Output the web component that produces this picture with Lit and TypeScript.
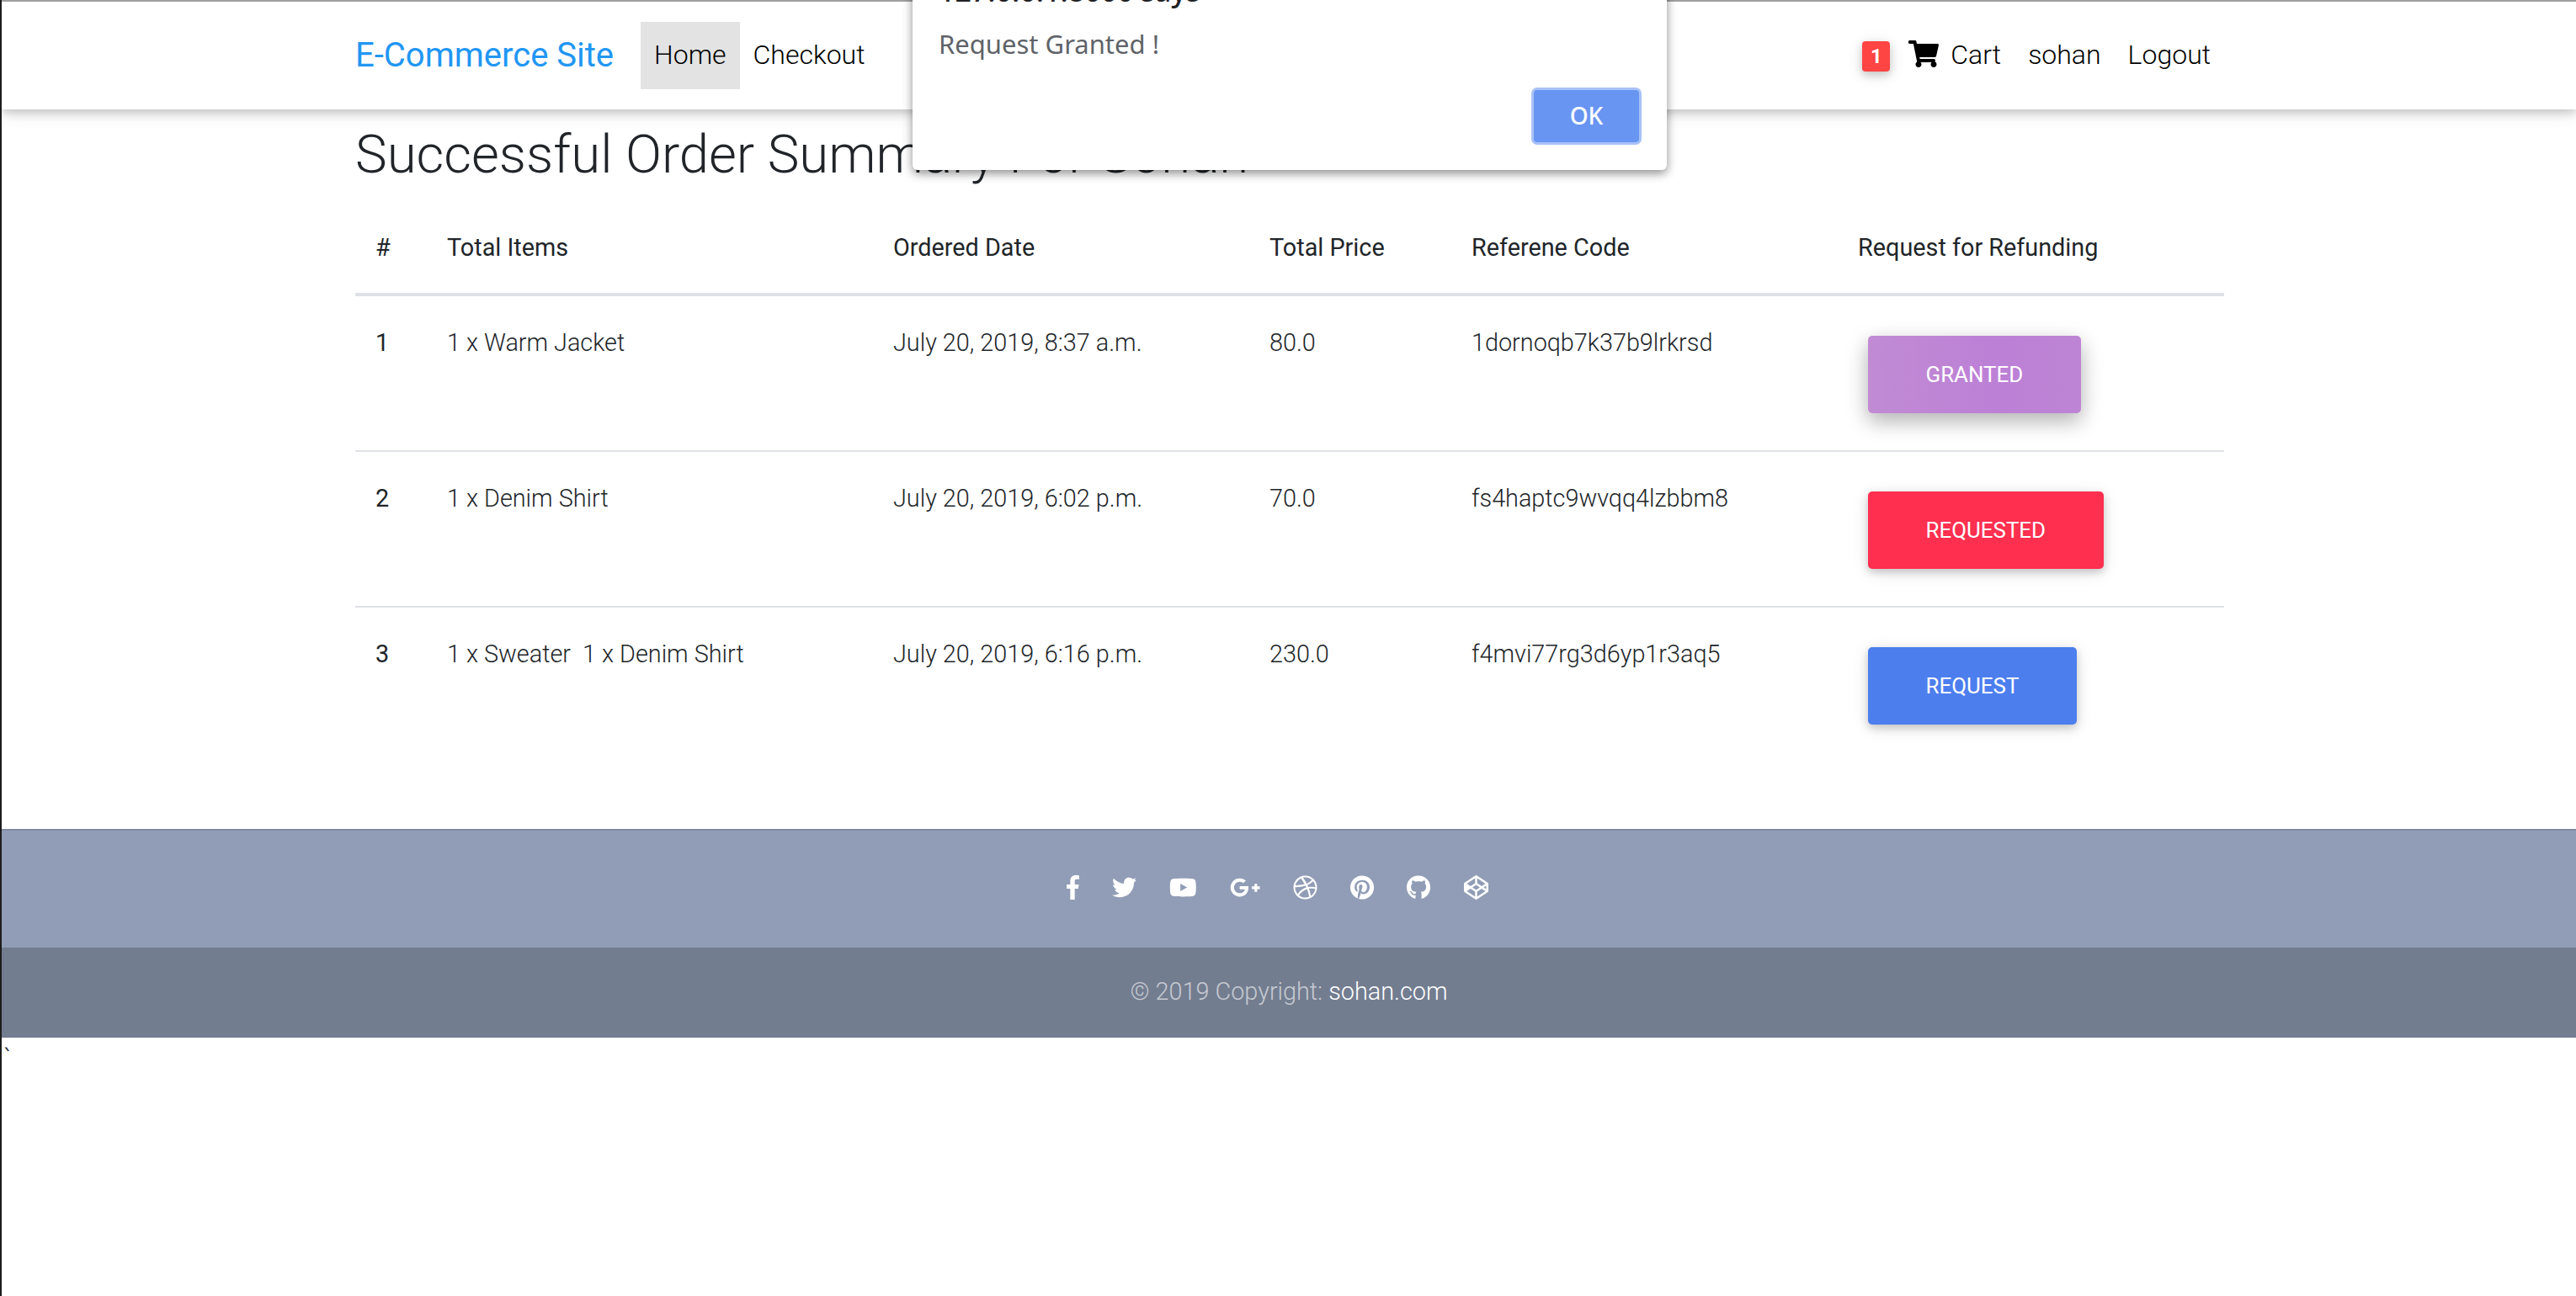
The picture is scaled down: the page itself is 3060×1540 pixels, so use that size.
import { LitElement, html, css, svg } from "lit";
import { customElement } from "lit/decorators.js";
import { classMap } from "lit/directives/class-map.js";

const SOCIAL = [
  { w: 264, d: "M76.7 512V283H0v-91h76.7v-71.7C76.7 42.4 124.3 0 193.8 0c33.3 0 61.9 2.5 70.2 3.6V85h-48.2c-37.8 0-45.1 18-45.1 44.3V192H256l-11.7 91h-73.6v229" },
  { w: 512, d: "M459.37 151.716c.325 4.548.325 9.097.325 13.645 0 138.72-105.583 298.558-298.558 298.558-59.452 0-114.68-17.219-161.137-47.106 8.447.974 16.568 1.299 25.34 1.299 49.055 0 94.213-16.568 130.274-44.832-46.132-.975-84.792-31.188-98.112-72.772 6.498.974 12.995 1.624 19.818 1.624 9.421 0 18.843-1.3 27.614-3.573-48.081-9.747-84.143-51.98-84.143-102.985v-1.299c13.969 7.797 30.214 12.67 47.431 13.319-28.264-18.843-46.781-51.005-46.781-87.391 0-19.492 5.197-37.36 14.294-52.954 51.655 63.675 129.3 105.258 216.365 109.807-1.624-7.797-2.599-15.918-2.599-24.04 0-57.828 46.782-104.934 104.934-104.934 30.213 0 57.502 12.67 76.67 33.137 23.715-4.548 46.456-13.32 66.599-25.34-7.798 24.366-24.366 44.833-46.132 57.827 21.117-2.273 41.584-8.122 60.426-16.243-14.292 20.791-32.161 39.308-52.628 54.253z" },
  { w: 576, d: "M549.655 124.083c-6.281-23.65-24.787-42.276-48.284-48.597C458.781 64 288 64 288 64S117.22 64 74.629 75.486c-23.497 6.322-42.003 24.947-48.284 48.597-11.412 42.867-11.412 132.305-11.412 132.305s0 89.438 11.412 132.305c6.281 23.65 24.787 41.5 48.284 47.821C117.22 448 288 448 288 448s170.78 0 213.371-11.486c23.497-6.321 42.003-24.171 48.284-47.821 11.412-42.867 11.412-132.305 11.412-132.305s0-89.438-11.412-132.305zm-317.51 213.508V175.185l142.739 81.205-142.739 81.201z" },
  { w: 640, d: "M386.061 228.496c1.834 9.692 3.143 19.384 3.143 31.956C389.204 370.205 315.599 448 204.8 448c-106.084 0-192-85.915-192-192s85.916-192 192-192c51.864 0 95.083 18.859 128.611 50.292l-52.126 50.03c-14.145-13.621-39.028-29.599-76.485-29.599-65.484 0-118.92 54.221-118.92 121.277 0 67.056 53.436 121.277 118.92 121.277 75.961 0 104.513-54.745 108.965-82.773H204.8v-66.009h181.261zm185.406 6.437V179.2h-56.001v55.733h-55.733v56.001h55.733v55.733h56.001v-55.733H627.2v-56.001h-55.733z" },
  { w: 512, d: "M256 8C119.252 8 8 119.252 8 256s111.252 248 248 248 248-111.252 248-248S392.748 8 256 8zm163.97 114.366c29.503 36.046 47.369 81.957 47.835 131.955-6.984-1.477-77.018-15.682-147.502-6.818-5.752-14.041-11.181-26.393-18.617-41.614 78.321-31.977 113.818-77.482 118.284-83.523zM396.421 97.87c-3.81 5.427-35.697 48.286-111.021 76.519-34.712-63.776-73.185-116.168-79.04-124.008 67.176-16.193 137.966 1.27 190.061 47.489zm-230.48-33.25c5.585 7.659 43.438 60.116 78.537 122.509-99.087 26.313-186.36 25.934-195.834 25.809C62.38 147.205 106.678 92.573 165.941 64.62zM44.17 256.323c0-2.166.043-4.322.108-6.473 9.268.19 111.92 1.513 217.706-30.146 6.064 11.868 11.857 23.915 17.174 35.949-76.599 21.575-146.194 83.527-180.531 142.306C64.794 360.405 44.17 310.73 44.17 256.323zm81.807 167.113c22.127-45.233 82.178-103.622 167.579-132.756 29.74 77.283 42.039 142.053 45.189 160.638-68.112 29.013-150.015 21.053-212.768-27.882zm248.38 8.489c-2.171-12.886-13.446-74.897-41.152-151.033 66.38-10.626 124.7 6.768 131.947 9.055-9.442 58.941-43.273 109.844-90.795 141.978z" },
  { w: 496, d: "M496 256c0 137-111 248-248 248-25.6 0-50.2-3.9-73.4-11.1 10.1-16.5 25.2-43.5 30.8-65 3-11.6 15.4-59 15.4-59 8.1 15.4 31.7 28.5 56.8 28.5 74.8 0 128.7-68.8 128.7-154.3 0-81.9-66.9-143.2-152.9-143.2-107 0-163.9 71.8-163.9 150.1 0 36.4 19.4 81.7 50.3 96.1 4.7 2.2 7.2 1.2 8.3-3.3.8-3.4 5-20.3 6.9-28.1.6-2.5.3-4.7-1.7-7.1-10.1-12.5-18.3-35.3-18.3-56.6 0-54.7 41.4-107.6 112-107.6 60.9 0 103.6 41.5 103.6 100.9 0 67.1-33.9 113.6-78 113.6-24.3 0-42.6-20.1-36.7-44.8 7-29.5 20.5-61.3 20.5-82.6 0-19-10.2-34.9-31.4-34.9-24.9 0-44.9 25.7-44.9 60.2 0 22 7.4 36.8 7.4 36.8s-24.5 103.8-29 123.2c-5 21.4-3 51.6-.9 71.2C65.4 450.9 0 361.1 0 256 0 119 111 8 248 8s248 111 248 248z" },
  { w: 496, d: "M165.9 397.4c0 2-2.3 3.6-5.2 3.6-3.3.3-5.6-1.3-5.6-3.6 0-2 2.3-3.6 5.2-3.6 3-.3 5.6 1.3 5.6 3.6zm-31.1-4.5c-.7 2 1.3 4.3 4.3 4.9 2.6 1 5.6 0 6.2-2s-1.3-4.3-4.3-5.2c-2.6-.7-5.5.3-6.2 2.3zm44.2-1.7c-2.9.7-4.9 2.6-4.6 4.9.3 2 2.9 3.3 5.9 2.6 2.9-.7 4.9-2.6 4.6-4.6-.3-1.9-3-3.2-5.9-2.9zM244.8 8C106.1 8 0 113.3 0 252c0 110.9 69.8 205.8 169.5 239.2 12.8 2.3 17.3-5.6 17.3-12.1 0-6.2-.3-40.4-.3-61.4 0 0-70 15-84.7-29.8 0 0-11.4-29.1-27.8-36.6 0 0-22.9-15.7 1.6-15.4 0 0 24.9 2 38.6 25.8 21.9 38.6 58.6 27.5 72.9 20.9 2.3-16 8.8-27.1 16-33.7-55.9-6.2-112.3-14.3-112.3-110.5 0-27.5 7.6-41.3 23.6-58.9-2.6-6.5-11.1-33.3 2.6-67.9 20.9-6.5 69 27 69 27 20-5.6 41.5-8.5 62.8-8.5s42.8 2.9 62.8 8.5c0 0 48.1-33.6 69-27 13.7 34.7 5.2 61.4 2.6 67.9 16 17.7 25.8 31.5 25.8 58.9 0 96.5-58.9 104.2-114.8 110.5 9.2 7.9 17 22.9 17 46.4 0 33.7-.3 75.4-.3 83.6 0 6.5 4.6 14.4 17.3 12.1C428.2 457.8 496 362.9 496 252 496 113.3 383.5 8 244.8 8z" },
  { w: 512, d: "M502.285 159.704l-234-156c-7.987-4.915-16.511-4.96-24.571 0l-234 156C3.714 163.703 0 170.847 0 177.989v155.999c0 7.143 3.714 14.286 9.715 18.286l234 156.022c7.987 4.915 16.511 4.96 24.571 0l234-156.022c6-3.999 9.715-11.143 9.715-18.286V177.989c-.001-7.142-3.715-14.286-9.716-18.285zM278 63.131l172.286 114.858-76.857 51.429L278 165.703V63.131zm-44 0v102.572l-95.429 63.715-76.857-51.429L234 63.131zM44 219.132v73.715l55.143-36.857L44 219.132zm190 229.715L61.714 333.989l76.857-51.429L234 346.275v102.572zm22-140.858l-77.715-52 77.715-52 77.715 52-77.715 52zm22 140.858V346.275l95.429-63.715 76.857 51.429L278 448.847zm190-156l-55.143-36.857L468 219.132v73.715z" },
];

const CART = "M528.12 301.319l47.273-208C578.806 78.301 567.391 64 551.99 64H159.208l-9.166-44.81C147.758 8.021 137.93 0 126.529 0H24C10.745 0 0 10.745 0 24v16c0 13.255 10.745 24 24 24h69.883l70.248 343.435C147.325 417.1 136 435.222 136 456c0 30.928 25.072 56 56 56s56-25.072 56-56c0-15.674-6.447-29.835-16.824-40h209.647C430.447 426.165 424 440.326 424 456c0 30.928 25.072 56 56 56s56-25.072 56-56c0-22.172-12.888-41.332-31.579-50.405l5.517-24.276c3.413-15.018-8.002-29.319-23.403-29.319H218.117l-6.545-32h293.145c11.206 0 20.92-7.754 23.403-18.681z";

const ORDERS = [
  { id: 1, items: ["1 x Warm Jacket"], date: "July 20, 2019, 8:37 a.m.", price: "80.0", code: "1dornoqb7k37b9lrkrsd", status: "granted", label: "Granted" },
  { id: 2, items: ["1 x Denim Shirt"], date: "July 20, 2019, 6:02 p.m.", price: "70.0", code: "fs4haptc9wvqq4lzbbm8", status: "requested", label: "Requested" },
  { id: 3, items: ["1 x Sweater", "1 x Denim Shirt"], date: "July 20, 2019, 6:16 p.m.", price: "230.0", code: "f4mvi77rg3d6yp1r3aq5", status: "request", label: "Request" },
];

@customElement("app-root")
export class AppRoot extends LitElement {
  static styles = css`
    :host {
      display: block;
      position: relative;
      box-sizing: border-box;
      min-height: 1540px;
      border-left: 2px solid #1c1c1c;
      background: #fff;
      font-family: Roboto, "Liberation Sans", sans-serif;
      font-weight: 300;
      font-size: 32px;
      line-height: 48px;
      color: #212529;
      overflow: hidden;
    }

    .wrap {
      width: 2220px;
      margin-left: 420px;
    }

    /* navbar */
    .navbar {
      position: relative;
      border-top: 2px solid #a0a0a0;
      height: 128px;
      background: #fff;
      box-shadow: 0 4px 10px rgba(0, 0, 0, 0.16), 0 4px 20px rgba(0, 0, 0, 0.12);
    }
    .navbar .wrap {
      display: flex;
      align-items: center;
      height: 100%;
    }
    .brand {
      font-size: 40px;
      font-weight: 400;
      color: #2196f3;
      margin-right: 32px;
    }
    .nav-link {
      padding: 15px 16px 17px;
      color: #000;
    }
    .nav-link.active {
      background: #e3e3e3;
    }
    .nav-right {
      margin-left: auto;
      display: flex;
      align-items: center;
    }
    .badge {
      width: 33px;
      height: 36px;
      margin-top: 2px;
      border-radius: 4px;
      background: #ff4444;
      color: #fff;
      font-size: 24px;
      font-weight: 700;
      line-height: 36px;
      text-align: center;
      box-shadow: 0 4px 10px rgba(0, 0, 0, 0.16), 0 4px 20px rgba(0, 0, 0, 0.12);
    }
    .cart {
      display: flex;
      align-items: center;
      padding: 15px 16px 17px 22px;
      color: #000;
    }
    .cart svg {
      width: 36px;
      height: 32px;
      margin-right: 14px;
      margin-top: -2px;
      fill: #000;
    }

    /* browser alert */
    .dialog {
      position: absolute;
      left: 1082px;
      top: -42px;
      box-sizing: border-box;
      width: 896px;
      height: 244px;
      padding: 0 30px 30px 31px;
      display: flex;
      flex-direction: column;
      background: #fff;
      border-radius: 0 0 6px 6px;
      box-shadow: 0 4px 12px rgba(0, 0, 0, 0.45);
      font-family: "Noto Sans", "Open Sans", sans-serif;
      font-weight: 400;
    }
    .dialog-title {
      font-size: 34px;
      font-weight: 500;
      line-height: 40px;
      margin-top: 11px;
      color: #202124;
    }
    .dialog-msg {
      font-size: 31px;
      line-height: 44px;
      margin-top: 21px;
      color: #5f6368;
    }
    .dialog-ok {
      margin-top: auto;
      align-self: flex-end;
      box-sizing: border-box;
      width: 131px;
      height: 68px;
      border: 3px solid #a8c2f8;
      border-radius: 7px;
      background: #6995f2;
      color: #fff;
      font-size: 28px;
      font-weight: 500;
      line-height: 60px;
      text-align: center;
    }

    /* order table */
    h2 {
      margin: 15px 0 16px;
      font-size: 63.5px;
      line-height: 77px;
      font-weight: 300;
      color: #212529;
    }
    table {
      width: 2220px;
      table-layout: fixed;
      border-collapse: collapse;
      font-size: 28.8px;
      line-height: 43.2px;
    }
    th,
    td {
      padding: 35.2px 24px 32px;
      text-align: left;
      vertical-align: top;
    }
    tbody th,
    tbody td {
      padding-top: 34px;
    }
    th {
      font-weight: 400;
    }
    thead th {
      border-bottom: 4px solid #dee2e6;
    }
    tbody tr + tr > * {
      border-top: 2px solid #dee2e6;
    }
    .item + .item {
      margin-left: 14px;
    }
    tbody td.cell-btn {
      padding-top: 34.6px;
      padding-bottom: 32.6px;
    }
    .btn {
      display: inline-block;
      margin: 12px;
      padding: 26.9px 68.5px;
      border-radius: 5px;
      color: #fff;
      font-size: 25.92px;
      font-weight: 400;
      line-height: 38px;
      text-transform: uppercase;
      vertical-align: top;
      box-shadow: 0 4px 10px rgba(0, 0, 0, 0.16), 0 4px 20px rgba(0, 0, 0, 0.12);
    }
    .btn-granted {
      background: linear-gradient(90deg, #c18bd4, #bc80d6 60%, #bd84d4);
      box-shadow: 0 10px 22px rgba(0, 0, 0, 0.18), 0 8px 30px rgba(0, 0, 0, 0.15);
    }
    .btn-requested {
      background: #ff2f4f;
    }
    .btn-request {
      background: #4c7eee;
    }

    /* footer */
    footer {
      margin-top: 80px;
    }
    .social {
      box-sizing: border-box;
      height: 141px;
      border-top: 2px solid #7f8aa0;
      background: #919db6;
      display: flex;
      align-items: center;
      justify-content: center;
      gap: 39px;
      padding: 0 27px 4px 0;
    }
    .social svg {
      height: 29px;
      fill: #fff;
    }
    .copyright {
      height: 107px;
      background: #737d90;
      color: rgba(255, 255, 255, 0.6);
      font-size: 28.8px;
      line-height: 105px;
      text-align: center;
    }
    .copyright span {
      color: #fff;
    }
    .stray {
      padding-left: 2px;
      color: #212529;
    }
  `;

  renderOrder(o: (typeof ORDERS)[number]) {
    return html`
      <tr>
        <th>${o.id}</th>
        <td>${o.items.map((i) => html`<span class="item">${i}</span>`)}</td>
        <td>${o.date}</td>
        <td>${o.price}</td>
        <td>${o.code}</td>
        <td class="cell-btn">
          <span class=${classMap({ btn: true, [`btn-${o.status}`]: true })}>${o.label}</span>
        </td>
      </tr>
    `;
  }

  render() {
    return html`
      <nav class="navbar">
        <div class="wrap">
          <span class="brand">E-Commerce Site</span>
          <span class="nav-link active">Home</span>
          <span class="nav-link">Checkout</span>
          <div class="nav-right">
            <span class="badge">1</span>
            <span class="cart">
              <svg viewBox="0 0 576 512">${svg`<path d=${CART}></path>`}</svg>
              Cart
            </span>
            <span class="nav-link">sohan</span>
            <span class="nav-link">Logout</span>
          </div>
        </div>
      </nav>

      <div class="dialog">
        <div class="dialog-title">127.0.0.1:8000 says</div>
        <div class="dialog-msg">Request Granted !</div>
        <div class="dialog-ok">OK</div>
      </div>

      <main class="wrap">
        <h2>Successful Order Summary For Sohan</h2>
        <table>
          <colgroup>
            <col style="width: 85px" />
            <col style="width: 530px" />
            <col style="width: 447px" />
            <col style="width: 240px" />
            <col style="width: 459px" />
            <col style="width: 459px" />
          </colgroup>
          <thead>
            <tr>
              <th>#</th>
              <th>Total Items</th>
              <th>Ordered Date</th>
              <th>Total Price</th>
              <th>Referene Code</th>
              <th>Request for Refunding</th>
            </tr>
          </thead>
          <tbody>
            ${ORDERS.map((o) => this.renderOrder(o))}
          </tbody>
        </table>
      </main>

      <footer>
        <div class="social">
          ${SOCIAL.map(
            (s) => html`<svg viewBox="0 0 ${s.w} 512" style="width: ${(s.w / 512) * 29}px">
              ${svg`<path d=${s.d}></path>`}
            </svg>`
          )}
        </div>
        <div class="copyright">© 2019 Copyright: <span>sohan.com</span></div>
      </footer>
      <div class="stray">\`</div>
    `;
  }
}
